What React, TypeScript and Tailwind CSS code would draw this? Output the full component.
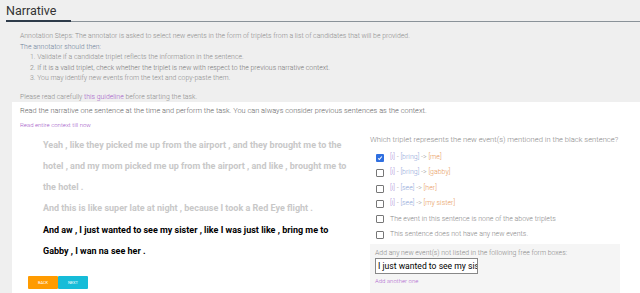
import React from "react";

const Check = ({ checked }: { checked?: boolean }) =>
  checked ? (
    <span className="inline-flex w-[8px] h-[8px] bg-[#2f6fe0] rounded-[1px] items-center justify-center shrink-0">
      <svg width="6" height="6" viewBox="0 0 10 10"><path d="M2 5.5 L4 7.5 L8 2.5" stroke="white" strokeWidth="1.8" fill="none" /></svg>
    </span>
  ) : (
    <span className="inline-block w-[8px] h-[8px] border border-[#777] rounded-[1px] bg-white shrink-0" />
  );

const Triplet = ({ s, v, o }: { s: string; v: string; o: string }) => (
  <span>
    <span className="text-[#a98fd8]">[{s}]</span>
    <span className="text-[#999]"> - </span>
    <span className="text-[#8ea6d8]">[{v}]</span>
    <span className="text-[#999]"> -&gt; </span>
    <span className="text-[#e89a5a]">[{o}]</span>
  </span>
);

export default function App() {
  return (
    <div className="w-[640px] h-[293px] bg-[#efefef] overflow-hidden" style={{ fontFamily: "Roboto, 'Liberation Sans', sans-serif" }}>
      <div className="pl-[6px] pt-[3px] text-[12.5px] leading-[15px] text-[#333]">Narrative</div>
      <div className="relative ml-[6px] mt-[2px] h-[2px]">
        <div className="absolute left-0 right-0 top-[1px] h-px bg-[#8a9299]" />
        <div className="absolute left-0 top-0 w-[65px] h-[2px] bg-[#2e3b4a]" />
      </div>
      <div className="pl-[20px] pt-[9px] text-[6.9px] leading-[10.5px] text-[#8c8c8c] font-light">
        <div>Annotation Steps: The annotator is asked to select new events in the form of triplets from a list of candidates that will be provided.</div>
        <div className="text-[#6d7f99]">The annotator should then:</div>
        <ol className="pl-[10px]">
          <li>1. Validate if a candidate triplet reflects the information in the sentence.</li>
          <li className="text-[#777]">2. If it is a valid triplet, check whether the triplet is new with respect to the previous narrative context.</li>
          <li>3. You may identify new events from the text and copy-paste them.</li>
        </ol>
        <div className="mt-[8px]">Please read carefully <span className="text-[#a45ac8]">this guideline</span> before starting the task.</div>
      </div>
      <div className="ml-[12px] bg-white h-[200px] flex flex-col">
        <div className="pl-[8px] pt-[4px] text-[7.4px] leading-[10px] text-[#666] font-light">Read the narrative one sentence at the time and perform the task. You can always consider previous sentences as the context.</div>
        <div className="pl-[8px] pt-[5px] text-[6px] leading-[8px] text-[#a45ac8] font-light">Read entire context till now</div>
        <div className="flex">
          <div className="w-[358px] pl-[31px] pr-[12px] pt-[6px]">
            <div className="text-[9px] leading-[21px] font-bold text-[#c8c8c8]">
              Yeah , like they picked me up from the airport , and they brought me to the hotel , and my mom picked me up from the airport , and like , brought me to the hotel .
            </div>
            <div className="text-[9px] leading-[21px] font-bold text-[#c8c8c8]">
              And this is like super late at night , because I took a Red Eye flight .
            </div>
            <div className="text-[9px] leading-[21px] font-bold text-black mt-[1px] pr-[10px]">
              And aw , I just wanted to see my sister , like I was just like , bring me to Gabby , I wan na see her .
            </div>
            <div className="flex mt-[14px] -ml-[15px]">
              <button className="w-[30px] h-[13px] bg-[#ff9b00] text-white text-[4px] leading-[13px] rounded-[1px]">BACK</button>
              <button className="w-[30px] h-[13px] bg-[#16bcd8] text-white text-[4px] leading-[13px] rounded-[1px]">NEXT</button>
            </div>
          </div>
          <div className="flex-1 pt-[6px]">
            <div className="text-[7.6px] leading-[10px] text-[#888] font-light">Which triplet represents the new event(s) mentioned in the black sentence?</div>
            <div className="pl-[6px] mt-[5px] text-[7px] leading-[15.4px] font-light">
              <div className="flex items-center gap-[6px]"><Check checked /><Triplet s="i" v="bring" o="me" /></div>
              <div className="flex items-center gap-[6px]"><Check /><Triplet s="i" v="bring" o="gabby" /></div>
              <div className="flex items-center gap-[6px]"><Check /><Triplet s="i" v="see" o="her" /></div>
              <div className="flex items-center gap-[6px]"><Check /><Triplet s="i" v="see" o="my sister" /></div>
              <div className="flex items-center gap-[6px] text-[#888]"><Check /><span>The event in this sentence is none of the above triplets</span></div>
              <div className="flex items-center gap-[6px] text-[#888]"><Check /><span>This sentence does not have any new events.</span></div>
            </div>
            <div className="mt-[2px] mr-[20px] bg-[#f5f5f5] h-[60px] pl-[5px] pt-[5px]">
              <div className="text-[6.9px] leading-[8px] text-[#888] font-light whitespace-nowrap">Add any new event(s) not listed in the following free form boxes:</div>
              <div className="mt-[1px] w-[103px] h-[16px] border border-[#888] bg-white overflow-hidden whitespace-nowrap pl-[2px] text-[8.6px] leading-[14px] text-black">I just wanted to see my sister</div>
              <div className="mt-[3px] text-[6px] leading-[8px] text-[#b06ad0] font-light">Add another one</div>
            </div>
          </div>
        </div>
      </div>
    </div>
  );
}
